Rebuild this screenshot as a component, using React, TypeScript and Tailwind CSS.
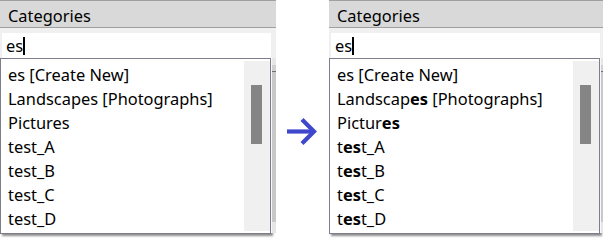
import React from "react";

const FONT = { fontFamily: '"Noto Sans", "Open Sans", sans-serif' };

type Item = { parts: { t: string; b?: boolean }[] };

const plain: Item[] = [
  { parts: [{ t: "es [Create New]" }] },
  { parts: [{ t: "Landscapes [Photographs]" }] },
  { parts: [{ t: "Pictures" }] },
  { parts: [{ t: "test_A" }] },
  { parts: [{ t: "test_B" }] },
  { parts: [{ t: "test_C" }] },
  { parts: [{ t: "test_D" }] },
];

const bold: Item[] = [
  { parts: [{ t: "es [Create New]" }] },
  { parts: [{ t: "Landscap" }, { t: "es", b: true }, { t: " [Photographs]" }] },
  { parts: [{ t: "Pictur" }, { t: "es", b: true }] },
  { parts: [{ t: "t" }, { t: "es", b: true }, { t: "t_A" }] },
  { parts: [{ t: "t" }, { t: "es", b: true }, { t: "t_B" }] },
  { parts: [{ t: "t" }, { t: "es", b: true }, { t: "t_C" }] },
  { parts: [{ t: "t" }, { t: "es", b: true }, { t: "t_D" }] },
];

function Panel({ items }: { items: Item[] }) {
  return (
    <div className="w-[276px] shrink-0 flex flex-col text-[16.4px] text-black" style={FONT}>
      <div className="h-[28px] bg-[#d9d9d9] border-t border-b border-[#a0a0a0] pl-[8px] pt-[4px] flex items-center leading-none">
        Categories
      </div>
      <div className="bg-[#f0f0f0] pt-[5px] pl-[2px] pr-[5px]">
        <div className="h-[25px] w-[269px] bg-white flex items-center pl-[4px] pt-[1px]">
          <span className="leading-none">es</span>
          <span className="w-[2px] h-[18px] bg-black" />
        </div>
      </div>
      <div className="flex">
        <div className="w-[271px] h-[176px] border border-[#7d7d8c] bg-white flex py-[2px] shadow-[2px_2px_2px_rgba(0,0,0,0.45)]">
          <div className="flex-1 flex flex-col pl-[7px] pt-[2px]">
            {items.map((it, i) => (
              <div key={i} className="h-[24px] flex items-center leading-none">
                <span className="whitespace-pre">
                  {it.parts.map((p, j) =>
                    p.b ? (
                      <b key={j} className="font-bold">
                        {p.t}
                      </b>
                    ) : (
                      <React.Fragment key={j}>{p.t}</React.Fragment>
                    )
                  )}
                </span>
              </div>
            ))}
          </div>
          <div className="w-[26px] bg-[#f0f0f0] pt-[24px]">
            <div className="ml-[7px] w-[11px] h-[59px] bg-[#858585]" />
          </div>
        </div>
        <div className="w-[5px] h-[175px] flex">
          <div className="w-[1px] bg-[#f8f8f8]" />
          <div className="flex-1 bg-[#e6e6e6] pt-[7px]">
            <div className="h-[6px] bg-[#d0d0d0]" />
            <div className="h-[1px] bg-[#707070]" />
            <div className="h-[150px] bg-[#c8c8c8]" />
          </div>
        </div>
      </div>
    </div>
  );
}

export default function App() {
  return (
    <div className="w-[603px] h-[239px] bg-white flex overflow-hidden">
      <Panel items={plain} />
      <div className="w-[53px] shrink-0 h-[239px]">
        <svg width="53" height="239" viewBox="0 0 53 239">
          <line x1="11" y1="131.5" x2="36" y2="131.5" stroke="#3f48cc" strokeWidth="4.2" />
          <polyline
            points="26,119.5 38,131.5 26,143.5"
            fill="none"
            stroke="#3f48cc"
            strokeWidth="4.2"
            strokeLinejoin="miter"
          />
        </svg>
      </div>
      <Panel items={bold} />
    </div>
  );
}
